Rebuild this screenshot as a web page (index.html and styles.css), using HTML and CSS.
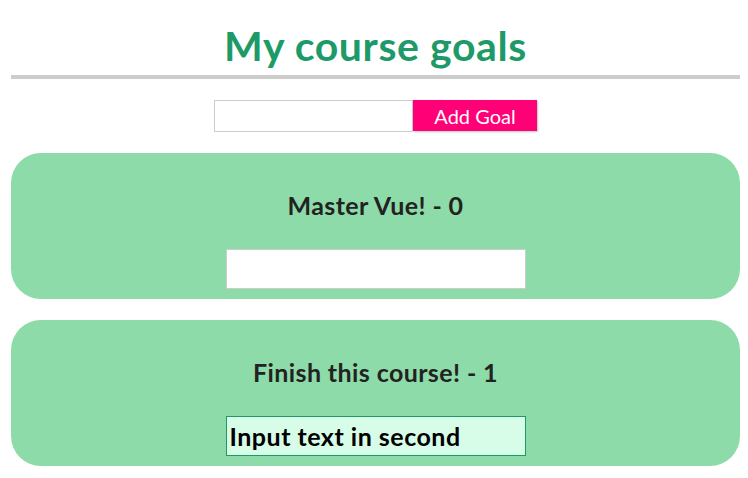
FILE: index.html
```html
<!DOCTYPE html>
<html lang="en">
<head>
<meta charset="utf-8">
<title>My course goals</title>
<link rel="stylesheet" href="styles.css">
</head>
<body>
<div class="page">
  <header class="header">
    <h1 class="title">My course goals</h1>
  </header>
  <form class="goal-form">
    <input class="goal-input" type="text">
    <button class="goal-btn" type="button">Add Goal</button>
  </form>
  <ul class="goals">
    <li class="goal">
      <h2 class="goal-title">Master Vue! - 0</h2>
      <input class="goal-field" type="text">
    </li>
    <li class="goal">
      <h2 class="goal-title">Finish this course! - 1</h2>
      <input class="goal-field goal-field--active" type="text" value="Input text in second">
    </li>
  </ul>
</div>
</body>
</html>
```
FILE: styles.css
```css
* { box-sizing: border-box; }
html, body { margin: 0; padding: 0; background: #fff; }
body { font-family: Lato, "Open Sans", sans-serif; }
.page { padding: 0 8px 0 11px; }
.header { border-bottom: 4px solid #cccccc; height: 79px; display: flex; align-items: flex-start; justify-content: center; }
.title { margin: 0; padding-top: 24px; font-size: 41px; line-height: 44px; font-weight: 700; letter-spacing: 0.6px; color: #1e9a68; }
.goal-form { display: flex; justify-content: center; margin-top: 21px; }
.goal-input { width: 199px; height: 32px; border: 1px solid #ccc; margin: 0; padding: 0 4px; font: inherit; }
.goal-btn { width: 124px; height: 31px; border: none; background: #ff0077; color: #fff; font-family: Lato, sans-serif; font-size: 20px; margin: 0; padding: 0; box-shadow: 1px 1px 2px rgba(0,0,0,0.25); }
.goals { list-style: none; margin: 21px 0 0; padding: 0; display: flex; flex-direction: column; gap: 21px; }
.goal { background: #8ddba8; border-radius: 30px; height: 146px; padding: 37px 0 10px; display: flex; flex-direction: column; align-items: center; }
.goal-title { margin: 0 0 29px; font-size: 25px; line-height: 30px; font-weight: 700; letter-spacing: 0.4px; color: #222; }
.goal-field { width: 300px; height: 40px; border: 1px solid #ccc; background: #fff; margin: 0; padding: 0 3px; font-family: Lato, sans-serif; font-size: 25px; font-weight: 700; letter-spacing: 0.5px; color: #000; }
.goal-field--active { background: #d7fde9; border-color: #1e9a68; outline: none; }
```
